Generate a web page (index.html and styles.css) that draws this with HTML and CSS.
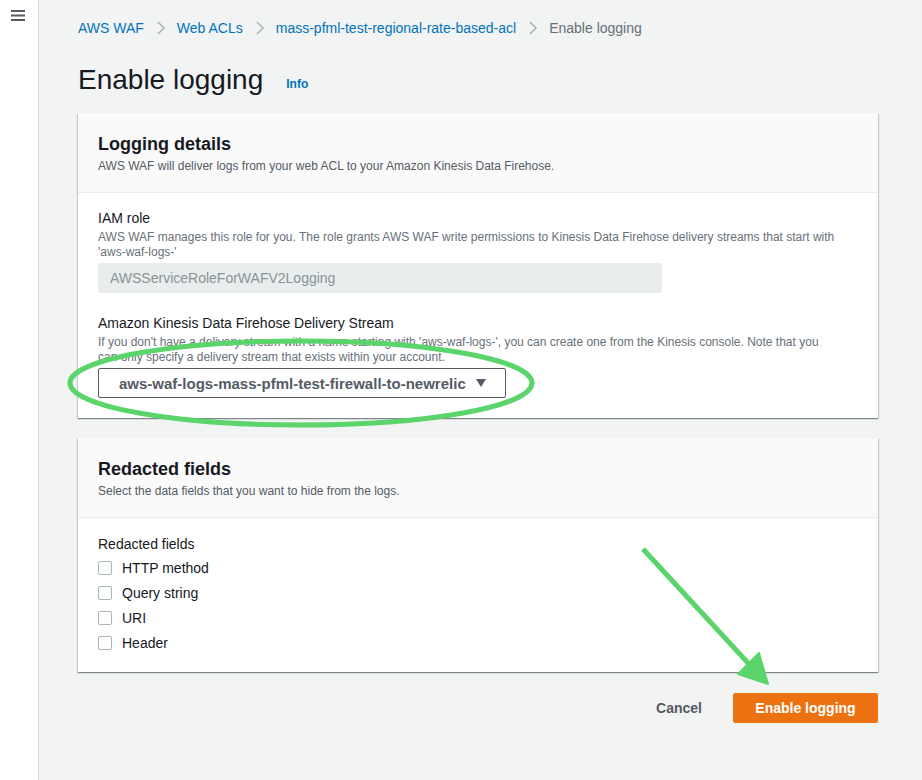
FILE: index.html
```html
<!DOCTYPE html>
<html>
<head>
<meta charset="utf-8">
<link rel="stylesheet" href="styles.css">
</head>
<body>
<div class="app">
  <aside class="sidebar">
    <svg class="menu" width="14" height="12" viewBox="0 0 14 12"><rect x="0" y="0" width="14" height="2" fill="#545b64"/><rect x="0" y="4.5" width="14" height="2" fill="#545b64"/><rect x="0" y="9" width="14" height="2" fill="#545b64"/></svg>
  </aside>
  <main class="main">
    <nav class="crumbs">
      <a>AWS WAF</a>
      <svg class="chev" width="10" height="14" viewBox="0 0 10 14"><path d="M2 1l6 6-6 6" fill="none" stroke="#aab7b8" stroke-width="1.6"/></svg>
      <a>Web ACLs</a>
      <svg class="chev" width="10" height="14" viewBox="0 0 10 14"><path d="M2 1l6 6-6 6" fill="none" stroke="#aab7b8" stroke-width="1.6"/></svg>
      <a>mass-pfml-test-regional-rate-based-acl</a>
      <svg class="chev" width="10" height="14" viewBox="0 0 10 14"><path d="M2 1l6 6-6 6" fill="none" stroke="#aab7b8" stroke-width="1.6"/></svg>
      <span class="current">Enable logging</span>
    </nav>
    <div class="title-row">
      <h1>Enable logging</h1>
      <span class="info">Info</span>
    </div>

    <section class="card">
      <header class="card-head">
        <h2>Logging details</h2>
        <p>AWS WAF will deliver logs from your web ACL to your Amazon Kinesis Data Firehose.</p>
      </header>
      <div class="card-body">
        <div class="field">
          <div class="label">IAM role</div>
          <div class="desc">AWS WAF manages this role for you. The role grants AWS WAF write permissions to Kinesis Data Firehose delivery streams that start with 'aws-waf-logs-'</div>
          <div class="input disabled">AWSServiceRoleForWAFV2Logging</div>
        </div>
        <div class="field">
          <div class="label">Amazon Kinesis Data Firehose Delivery Stream</div>
          <div class="desc">If you don't have a delivery stream with a name starting with 'aws-waf-logs-', you can create one from the Kinesis console. Note that you can only specify a delivery stream that exists within your account.</div>
          <div class="select-wrap">
            <div class="select">
              <span>aws-waf-logs-mass-pfml-test-firewall-to-newrelic</span>
              <svg width="10" height="8" viewBox="0 0 10 8"><path d="M0 0h10L5 8z" fill="#545b64"/></svg>
            </div>
            <svg class="ellipse" width="472" height="92" viewBox="0 0 472 92"><ellipse cx="236" cy="46" rx="231" ry="42" fill="none" stroke="#5ad46b" stroke-width="5"/></svg>
          </div>
        </div>
      </div>
    </section>

    <section class="card">
      <header class="card-head">
        <h2>Redacted fields</h2>
        <p>Select the data fields that you want to hide from the logs.</p>
      </header>
      <div class="card-body redacted">
        <div class="label">Redacted fields</div>
        <label class="check"><span class="box"></span>HTTP method</label>
        <label class="check"><span class="box"></span>Query string</label>
        <label class="check"><span class="box"></span>URI</label>
        <label class="check"><span class="box"></span>Header</label>
      </div>
    </section>

    <div class="actions">
      <button class="cancel">Cancel</button>
      <button class="primary">Enable logging</button>
      <svg class="arrow" width="140" height="150" viewBox="0 0 140 150"><line x1="2" y1="2" x2="108" y2="117" stroke="#5ad46b" stroke-width="5"/><path d="M97 127 L118 106 L127 137 Z" fill="#5ad46b" stroke="#5ad46b" stroke-width="2" stroke-linejoin="round"/></svg>
    </div>
  </main>
</div>
</body>
</html>
```

FILE: styles.css
```css
* { box-sizing: border-box; }
html, body { margin: 0; padding: 0; }
body {
  font-family: "Liberation Sans", Arial, sans-serif;
  background: #f2f3f3;
  color: #16191f;
  width: 922px;
  height: 780px;
  overflow: hidden;
}
.app { display: flex; min-height: 780px; }
.sidebar {
  width: 39px;
  flex: none;
  background: #fff;
  border-right: 1px solid #d5dbdb;
  padding: 10px 0 0 11px;
}
.menu { display: block; }
.main {
  flex: 1;
  padding: 0 44px 0 39px;
}
.crumbs {
  display: flex;
  align-items: center;
  height: 56px;
  font-size: 14px;
}
.crumbs a { color: #0073bb; }
.crumbs .chev { margin: 0 11px 0 12px; }
.crumbs .current { color: #687078; }
.title-row {
  display: flex;
  align-items: center;
  height: 48px;
}
h1 {
  margin: 0;
  font-size: 28px;
  font-weight: 400;
  color: #16191f;
}
.info {
  font-size: 12px;
  font-weight: 700;
  color: #0073bb;
  margin-left: 23px;
  margin-top: 8px;
}
.card {
  background: #fff;
  margin-top: 9px;
  box-shadow: 0 1px 1px 0 rgba(0,28,36,.3), 1px 1px 1px 0 rgba(0,28,36,.15), -1px 1px 1px 0 rgba(0,28,36,.15);
}
.card + .card { margin-top: 20px; }
.card-head {
  background: #fafafa;
  border-bottom: 1px solid #eaeded;
  padding: 20px 20px 18px;
}
h2 {
  margin: 0;
  font-size: 18px;
  font-weight: 700;
  line-height: 22px;
  color: #16191f;
}
.card-head p {
  margin: 3px 0 0;
  font-size: 12px;
  line-height: 16px;
  color: #545b64;
}
.card-body { padding: 16px 20px 20px; }
.field + .field { margin-top: 21px; }
.label {
  font-size: 14px;
  line-height: 18px;
  color: #16191f;
}
.desc {
  font-size: 12px;
  line-height: 15px;
  color: #687078;
  margin-top: 3px;
  padding-right: 20px;
}
.input {
  margin-top: 3px;
  width: 564px;
  height: 30px;
  border-radius: 2px;
  font-size: 14px;
  line-height: 30px;
  padding: 0 12px;
}
.input.disabled { background: #eaeded; color: #879596; }
.select-wrap { position: relative; margin-top: 3px; }
.select {
  width: 408px;
  height: 30px;
  border: 1px solid #545b64;
  border-radius: 2px;
  display: flex;
  align-items: center;
  justify-content: space-between;
  padding: 0 19px 0 20px;
  font-size: 15px;
  font-weight: 700;
  color: #545b64;
}
.ellipse {
  position: absolute;
  left: -33px;
  top: -31px;
  pointer-events: none;
}
.redacted { padding-top: 17px; padding-bottom: 17px; }
.redacted .label { margin-bottom: 2px; }
.check {
  display: flex;
  align-items: center;
  height: 25px;
  font-size: 14px;
  color: #16191f;
}
.box {
  width: 14px;
  height: 14px;
  border: 1px solid #aab7b8;
  border-radius: 2px;
  margin-right: 10px;
  background: #fff;
}
.actions {
  position: relative;
  display: flex;
  justify-content: flex-end;
  align-items: center;
  margin-top: 21px;
  gap: 31px;
}
button {
  font-family: inherit;
  font-size: 14px;
  font-weight: 700;
  border: none;
  cursor: pointer;
}
.cancel { background: none; color: #545b64; padding: 0; }
.primary {
  background: #ec7211;
  color: #fff;
  height: 30px;
  width: 145px;
  border-radius: 2px;
}
.arrow {
  position: absolute;
  left: 563px;
  top: -146px;
  pointer-events: none;
}
```
